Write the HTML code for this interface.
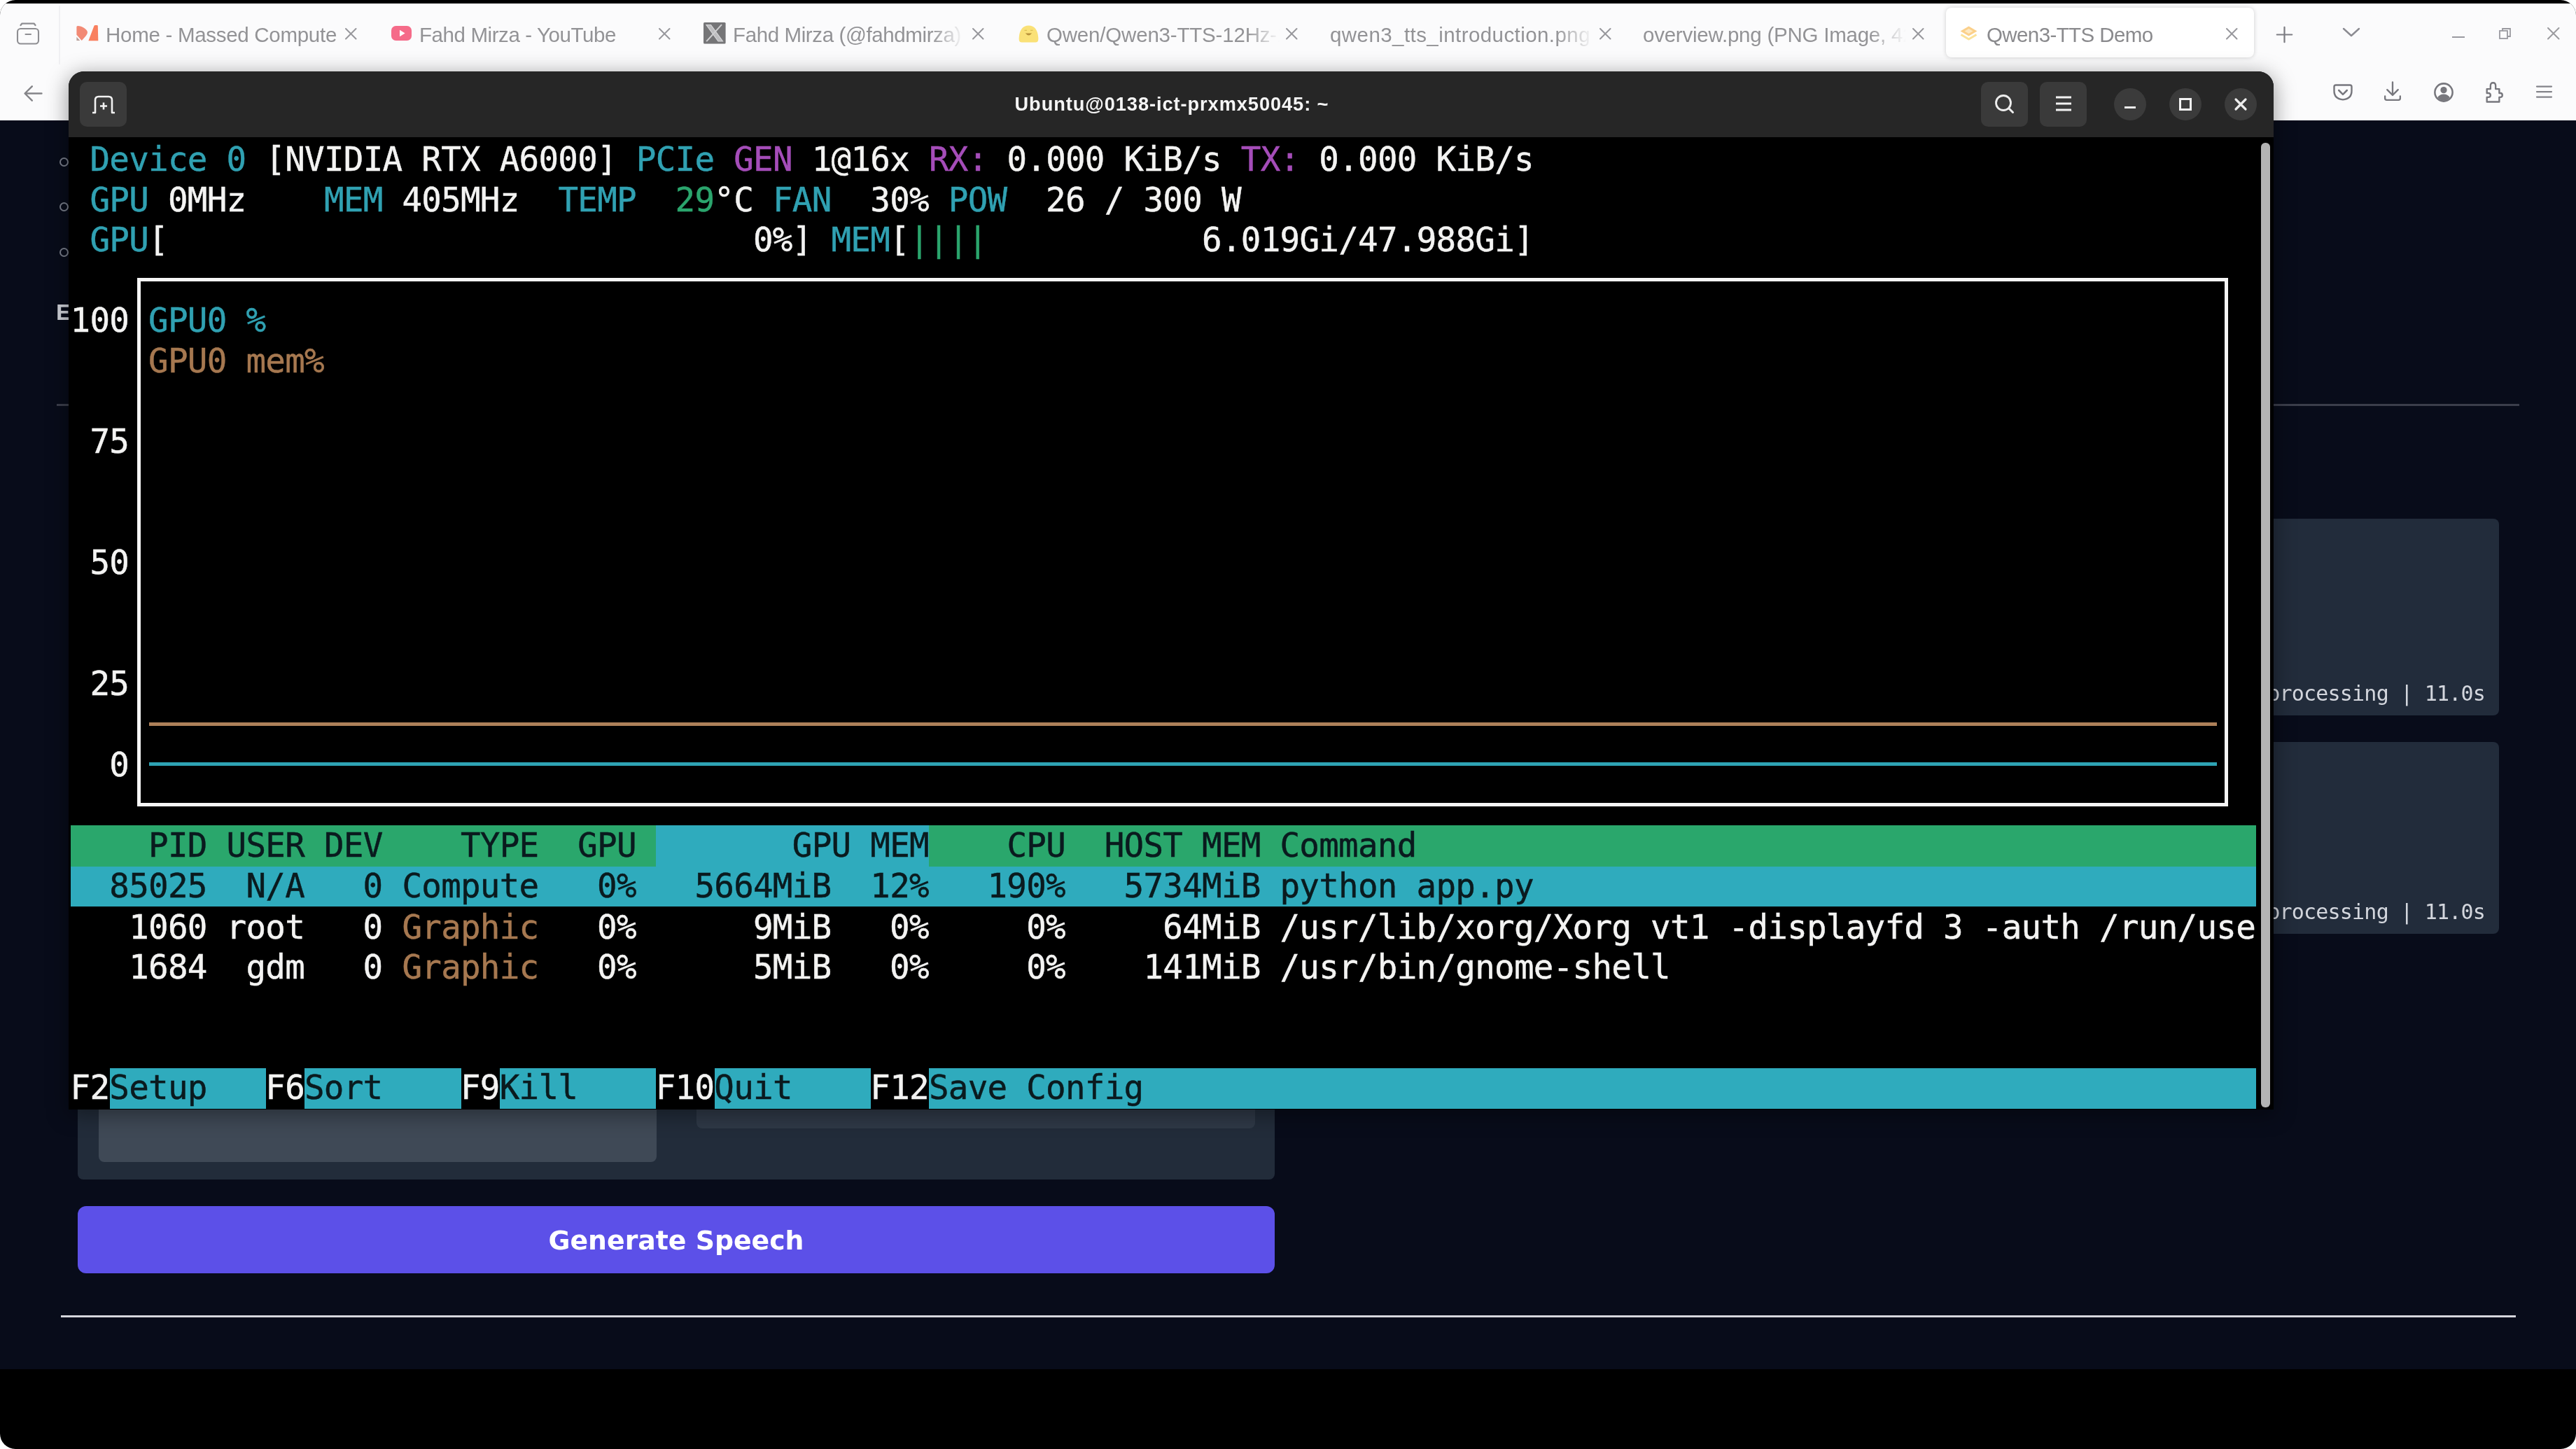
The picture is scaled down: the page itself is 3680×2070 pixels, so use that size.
<!DOCTYPE html>
<html lang="en">
<head>
<meta charset="utf-8">
<title>Qwen3-TTS Demo</title>
<style>
html,body{margin:0;padding:0;}
body{width:3680px;height:2070px;background:#fff;overflow:hidden;position:relative;font-family:"Liberation Sans",sans-serif;}
#frame{position:absolute;left:0;top:0;width:3680px;height:2070px;background:#000;border-radius:22px;overflow:hidden;will-change:transform;}
.abs{position:absolute;}
/* browser chrome */
#chrome{position:absolute;left:0;top:5px;width:3680px;height:168px;background:#fbfbfc;}
.tabtxt{position:absolute;top:22.5px;height:44px;line-height:44px;font-size:29.5px;color:#939396;white-space:nowrap;overflow:hidden;}
.tabx{position:absolute;width:18px;height:18px;}
/* page */
#page{position:absolute;left:0;top:172px;width:3680px;height:1784px;background:#080c1a;}
/* terminal */
#term{position:absolute;left:98px;top:102px;width:3150px;height:1483px;background:#000;border-radius:22px 22px 0 0;box-shadow:0 6px 30px 2px rgba(0,0,0,.38);}
#tbar{position:absolute;left:0;top:0;width:3150px;height:94px;background:#262626;border-radius:22px 22px 0 0;}
.t{position:absolute;white-space:pre;font-family:"DejaVu Sans Mono","Liberation Mono",monospace;font-size:47.5px;letter-spacing:-0.727px;line-height:57.68px;height:57.68px;-webkit-text-stroke:0.45px currentColor;}
.bg{position:absolute;}
.fade{-webkit-mask-image:linear-gradient(to right,#000 0,#000 86%,transparent 100%);mask-image:linear-gradient(to right,#000 0,#000 86%,transparent 100%);}
.mono{font-family:"DejaVu Sans Mono","Liberation Mono",monospace;font-size:30px;line-height:40px;letter-spacing:-0.8px;color:#d3d6dd;white-space:pre;}
</style>
</head>
<body>
<div id="frame">

<!-- ===== Browser chrome ===== -->
<div id="chrome">
<div class="abs" style="left:2780px;top:6px;width:440px;height:71px;background:#fff;border-radius:8px;box-shadow:0 0 6px rgba(0,0,0,.18);"></div>
<svg class="abs" style="left:20px;top:24px" width="40" height="38" viewBox="0 0 40 38"><g fill="none" stroke="#8e8e92" stroke-width="2.1" stroke-linecap="round" stroke-linejoin="round"><rect x="5" y="12" width="30" height="21.5" rx="4.5"/><path d="M9.5 7 L11.5 4.6 H28.5 L30.5 7" stroke-width="2.3"/><path d="M16.5 20h7.5"/></g></svg>
<div class="abs" style="left:83.5px;top:3px;width:2.5px;height:84px;background:#f0f0f3"></div>
<svg class="abs" style="left:108px;top:29px" width="34" height="26" viewBox="0 0 34 26"><path d="M1.4 4.5 Q1.4 3 3 3 C9 3 17 8 17 12.2 C17 15.5 12 20 8.8 24 L1.4 15.8 Z" fill="#f28a75"/><path d="M1.4 18.8 L6.3 24 L1.4 24 Z" fill="#b9a09a"/><path d="M26.3 3.2 Q26.8 2 28 2 H30.5 Q31.8 2 31.8 3.3 L32.3 24.2 H18.4 Z" fill="#f9805f"/></svg>
<div class="tabtxt" style="left:151px;width:336px;letter-spacing:-0.29px">Home - Massed Compute</div>
<svg class="abs" style="left:491.8px;top:33.8px" width="18.5" height="18.5" viewBox="-9.25 -9.25 18.5 18.5"><path d="M-7.25 -7.25L7.25 7.25M7.25 -7.25L-7.25 7.25" stroke="#97979c" stroke-width="2.0" fill="none" stroke-linecap="round"/></svg>
<svg class="abs" style="left:558.5px;top:32.3px" width="29" height="21" viewBox="0 0 29 21"><rect x="0" y="0" width="29" height="21" rx="6.5" fill="#f56b89"/><path d="M12 5.8 L19.6 10.5 L12 15.2 Z" fill="#fff"/></svg>
<div class="tabtxt" style="left:599px;width:300px;letter-spacing:-0.41px">Fahd Mirza - YouTube</div>
<svg class="abs" style="left:940.2px;top:34.2px" width="18.5" height="18.5" viewBox="-9.25 -9.25 18.5 18.5"><path d="M-7.25 -7.25L7.25 7.25M7.25 -7.25L-7.25 7.25" stroke="#97979c" stroke-width="2.0" fill="none" stroke-linecap="round"/></svg>
<svg class="abs" style="left:1005px;top:27.3px" width="32" height="31" viewBox="0 0 32 31"><rect width="31.6" height="30.6" rx="1.5" fill="#757577"/><path d="M4 3.5 L10.5 3.5 L27.5 27 L21 27 Z" fill="#bdbdbf" stroke="#d6d6d8" stroke-width="1.2"/><path d="M26 3.2 L4.2 27.2" stroke="#cfcfd1" stroke-width="2" fill="none"/></svg>
<div class="tabtxt fade" style="left:1047px;width:330px;letter-spacing:-0.39px">Fahd Mirza (@fahdmirza) on X</div>
<svg class="abs" style="left:1387.8px;top:34.2px" width="18.5" height="18.5" viewBox="-9.25 -9.25 18.5 18.5"><path d="M-7.25 -7.25L7.25 7.25M7.25 -7.25L-7.25 7.25" stroke="#97979c" stroke-width="2.0" fill="none" stroke-linecap="round"/></svg>
<svg class="abs" style="left:1455px;top:29.5px" width="29" height="27" viewBox="0 0 29 27"><path d="M4.5 25.5 C1 25.5 0.3 22.5 0.8 18 C1.5 8 6 1.5 14.5 1.5 C23 1.5 27.5 8 28.2 18 C28.7 22.5 28 25.5 24.5 25.5 Z" fill="#fae177"/><path d="M8.5 8.4h3.5M17 8.4h3.5" stroke="#dcbf55" stroke-width="1.4"/><path d="M9.8 12.6 Q14.5 18.4 19.2 12.6 Z" fill="#b8923a"/></svg>
<div class="tabtxt fade" style="left:1495px;width:333px;letter-spacing:-0.19px">Qwen/Qwen3-TTS-12Hz-1.7B</div>
<svg class="abs" style="left:1835.8px;top:34.2px" width="18.5" height="18.5" viewBox="-9.25 -9.25 18.5 18.5"><path d="M-7.25 -7.25L7.25 7.25M7.25 -7.25L-7.25 7.25" stroke="#97979c" stroke-width="2.0" fill="none" stroke-linecap="round"/></svg>
<div class="tabtxt fade" style="left:1900px;width:376px;letter-spacing:0.43px">qwen3_tts_introduction.png (PNG</div>
<svg class="abs" style="left:2283.8px;top:34.2px" width="18.5" height="18.5" viewBox="-9.25 -9.25 18.5 18.5"><path d="M-7.25 -7.25L7.25 7.25M7.25 -7.25L-7.25 7.25" stroke="#97979c" stroke-width="2.0" fill="none" stroke-linecap="round"/></svg>
<div class="tabtxt fade" style="left:2347px;width:376px;letter-spacing:-0.23px">overview.png (PNG Image, 4200</div>
<svg class="abs" style="left:2730.8px;top:34.2px" width="18.5" height="18.5" viewBox="-9.25 -9.25 18.5 18.5"><path d="M-7.25 -7.25L7.25 7.25M7.25 -7.25L-7.25 7.25" stroke="#97979c" stroke-width="2.0" fill="none" stroke-linecap="round"/></svg>
<svg class="abs" style="left:2799px;top:31px" width="27" height="24" viewBox="0 0 27 24"><path d="M13.5 1.5 L25.5 8.5 L13.5 15.5 L1.5 8.5 Z" fill="#fbd08a"/><path d="M13.5 5 L19.5 8.5 L13.5 12 L7.5 8.5 Z" fill="#fde9c4"/><path d="M2.5 13.5 L13.5 20 L24.5 13.5" stroke="#fbe29a" stroke-width="3" fill="none" stroke-linejoin="round"/></svg>
<div class="tabtxt" style="left:2838px;width:300px;color:#8a8a8d;letter-spacing:-0.6px">Qwen3-TTS Demo</div>
<svg class="abs" style="left:3178.8px;top:34.2px" width="18.5" height="18.5" viewBox="-9.25 -9.25 18.5 18.5"><path d="M-7.25 -7.25L7.25 7.25M7.25 -7.25L-7.25 7.25" stroke="#97979c" stroke-width="2.0" fill="none" stroke-linecap="round"/></svg>
<svg class="abs" style="left:3250.5px;top:32px" width="25" height="25" viewBox="0 0 28 28"><path d="M14 2V26M2 14H26" stroke="#7c7c82" stroke-width="2.5" stroke-linecap="round"/></svg>
<svg class="abs" style="left:3345px;top:33px" width="28" height="18" viewBox="0 0 28 18"><path d="M3 3L14 13L25 3" stroke="#8b8b91" stroke-width="2.4" fill="none" stroke-linecap="round" stroke-linejoin="round"/></svg>
<div class="abs" style="left:3503px;top:47px;width:18px;height:2px;background:#9a9aa0"></div>
<svg class="abs" style="left:3568px;top:33px" width="22" height="22" viewBox="0 0 22 22"><g fill="none" stroke="#9a9aa0" stroke-width="1.8"><rect x="3" y="6" width="11" height="11"/><path d="M7 6V3H18V14H14"/></g></svg>
<svg class="abs" style="left:3638.2px;top:33.2px" width="19.5" height="19.5" viewBox="-9.75 -9.75 19.5 19.5"><path d="M-7.75 -7.75L7.75 7.75M7.75 -7.75L-7.75 7.75" stroke="#9b9b9f" stroke-width="2.0" fill="none" stroke-linecap="round"/></svg>
<svg class="abs" style="left:32px;top:113.5px" width="31" height="29" viewBox="0 0 36 34"><path d="M32 17H5M16 5L4 17L16 29" stroke="#858589" stroke-width="2.9" fill="none" stroke-linecap="round" stroke-linejoin="round"/></svg>
<svg class="abs" style="left:3331.7px;top:111.5px" width="30" height="29" viewBox="0 0 36 34"><path d="M6 5H30Q33 5 33 8V15Q33 29 18 30Q3 29 3 15V8Q3 5 6 5Z" fill="none" stroke="#77777d" stroke-width="2.9"/><path d="M11 14L18 21L25 14" fill="none" stroke="#77777d" stroke-width="3" stroke-linecap="round" stroke-linejoin="round"/></svg>
<svg class="abs" style="left:3404.0px;top:109.5px" width="28" height="31" viewBox="0 0 36 40"><path d="M18 3V26M8 17L18 27L28 17" fill="none" stroke="#77777d" stroke-width="3" stroke-linecap="round" stroke-linejoin="round"/><path d="M4 29V33Q4 36 7 36H29Q32 36 32 33V29" fill="none" stroke="#77777d" stroke-width="3" stroke-linecap="round"/></svg>
<svg class="abs" style="left:3475.0px;top:110.5px" width="32" height="32" viewBox="0 0 38 38"><circle cx="19" cy="19" r="15" fill="none" stroke="#77777d" stroke-width="3"/><circle cx="19" cy="15" r="5.5" fill="#77777d"/><path d="M8.5 28Q12 22 19 22Q26 22 29.5 28Q25 33 19 33Q13 33 8.5 28Z" fill="#77777d"/></svg>
<svg class="abs" style="left:3549.0px;top:109.5px" width="28" height="33" viewBox="0 0 38 44"><path d="M6 16H13V10Q13 4 18 4Q23 4 23 10V16H30V24H32Q36 24 36 28Q36 32 32 32H30V41H6V32H9Q13 32 13 28Q13 24 9 24H6Z" transform="translate(-1,0)" fill="none" stroke="#77777d" stroke-width="3.2" stroke-linejoin="round"/></svg>
<svg class="abs" style="left:3620.5px;top:114.0px" width="27" height="24" viewBox="0 0 34 32"><path d="M3 6H31M3 16H31M3 26H31" stroke="#84848a" stroke-width="3" stroke-linecap="round"/></svg>
</div>

<!-- ===== Page ===== -->
<div id="page">
<div class="abs" style="left:85px;top:53px;width:9px;height:9px;border:2px solid #7a7f8c;border-radius:50%"></div>
<div class="abs" style="left:85px;top:117px;width:9px;height:9px;border:2px solid #7a7f8c;border-radius:50%"></div>
<div class="abs" style="left:85px;top:182px;width:9px;height:9px;border:2px solid #7a7f8c;border-radius:50%"></div>
<div class="abs" style="left:80px;top:256px;font:bold 34px/40px 'Liberation Mono',monospace;color:#cfd2d9">E</div>
<div class="abs" style="left:81px;top:405px;width:3518px;height:3px;background:#3b3e4b"></div>
<div class="abs" style="left:3200px;top:569px;width:370px;height:281px;background:#222c3b;border-radius:8px"></div>
<div class="abs" style="left:3200px;top:888px;width:370px;height:274px;background:#222c3b;border-radius:8px"></div>
<div class="abs mono" style="left:3100px;top:799px;width:450px;text-align:right">processing | 11.0s</div>
<div class="abs mono" style="left:3100px;top:1111px;width:450px;text-align:right">processing | 11.0s</div>
<div class="abs" style="left:111px;top:1228px;width:1710px;height:285px;background:#222c3a;border-radius:8px"></div>
<div class="abs" style="left:141px;top:1228px;width:797px;height:260px;background:#3f4956;border-radius:8px"></div>
<div class="abs" style="left:995px;top:1228px;width:798px;height:212px;background:#2f3947;border-radius:8px"></div>
<div class="abs" style="left:111px;top:1551px;width:1710px;height:96px;background:#5c50e8;border-radius:12px;color:#fff;font:bold 37.8px/98px 'DejaVu Sans',sans-serif;text-align:center">Generate Speech</div>
<div class="abs" style="left:87px;top:1707px;width:3507px;height:3px;background:#d5d6dc"></div>
</div>

<!-- ===== Terminal window ===== -->
<div id="term">
  <div id="tbar">
<div class="abs" style="left:16px;top:15px;width:67px;height:64px;background:#3a3a3a;border-radius:10px"></div>
<svg class="abs" style="left:32px;top:33px" width="36" height="30" viewBox="0 0 36 30"><path d="M2 26H6V8Q6 3 11 3H25Q30 3 30 8V26H34" fill="none" stroke="#f2f2f2" stroke-width="2.6" stroke-linejoin="round"/><path d="M18 11.5V21.5M13 16.5H23" stroke="#f2f2f2" stroke-width="2.6"/></svg>
<div class="abs" style="left:0;top:27px;width:3152px;text-align:center;font:bold 27.2px/40px 'Liberation Sans',sans-serif;color:#f5f5f5;letter-spacing:0.94px">Ubuntu@0138-ict-prxmx50045: ~</div>
<div class="abs" style="left:2732px;top:15px;width:67px;height:64px;background:#3a3a3a;border-radius:10px"></div>
<svg class="abs" style="left:2748px;top:28.5px" width="36" height="36" viewBox="0 0 36 36"><circle cx="16" cy="16" r="10.5" fill="none" stroke="#ededed" stroke-width="2.8"/><path d="M24 24L29.5 29.5" stroke="#ededed" stroke-width="3" stroke-linecap="round"/></svg>
<div class="abs" style="left:2816px;top:15px;width:67px;height:64px;background:#3a3a3a;border-radius:10px"></div>
<svg class="abs" style="left:2836px;top:32px" width="28" height="28" viewBox="0 0 28 28"><path d="M3 5H25M3 14H25M3 23H25" stroke="#f2f2f2" stroke-width="3"/></svg>
<div class="abs" style="left:2922px;top:24px;width:46px;height:46px;border-radius:50%;background:#3b3b3b"></div>
<div class="abs" style="left:3001px;top:24px;width:46px;height:46px;border-radius:50%;background:#3b3b3b"></div>
<div class="abs" style="left:3080px;top:24px;width:46px;height:46px;border-radius:50%;background:#3b3b3b"></div>
<div class="abs" style="left:2937px;top:50px;width:16px;height:3px;background:#ededed"></div>
<div class="abs" style="left:3015px;top:38px;width:12px;height:12px;border:3px solid #f2f2f2"></div>
<svg class="abs" style="left:3092px;top:36px" width="22" height="22" viewBox="0 0 22 22"><path d="M4 4L18 18M18 4L4 18" stroke="#ededed" stroke-width="3.2" stroke-linecap="round"/></svg>
  </div>
</div>
<div id="termtext">
<div class="bg" style="left:101.0px;top:1178.8px;width:836.5px;height:59.3px;background:#2aa76c"></div>
<div class="bg" style="left:937.1px;top:1178.8px;width:390.6px;height:59.3px;background:#2fabbd"></div>
<div class="bg" style="left:1327.3px;top:1178.8px;width:1895.6px;height:59.3px;background:#2aa76c"></div>
<div class="bg" style="left:101.0px;top:1238.1px;width:3121.8px;height:57.4px;background:#2fabbd"></div>
<div class="bg" style="left:156.7px;top:1525.7px;width:223.4px;height:58.8px;background:#2fabbd"></div>
<div class="bg" style="left:435.4px;top:1525.7px;width:223.4px;height:58.8px;background:#2fabbd"></div>
<div class="bg" style="left:714.1px;top:1525.7px;width:223.4px;height:58.8px;background:#2fabbd"></div>
<div class="bg" style="left:1020.7px;top:1525.7px;width:223.4px;height:58.8px;background:#2fabbd"></div>
<div class="bg" style="left:1327.3px;top:1525.7px;width:1895.6px;height:58.8px;background:#2fabbd"></div>
<div class="t" style="left:128.5px;top:198.6px;color:#30a1b2">Device 0</div>
<div class="t" style="left:379.3px;top:198.6px;color:#f3f3f2">[NVIDIA RTX A6000]</div>
<div class="t" style="left:908.8px;top:198.6px;color:#30a1b2">PCIe</div>
<div class="t" style="left:1048.2px;top:198.6px;color:#a54db9">GEN</div>
<div class="t" style="left:1159.7px;top:198.6px;color:#f3f3f2">1@16x</div>
<div class="t" style="left:1326.9px;top:198.6px;color:#a54db9">RX:</div>
<div class="t" style="left:1438.4px;top:198.6px;color:#f3f3f2">0.000 KiB/s</div>
<div class="t" style="left:1772.8px;top:198.6px;color:#a54db9">TX:</div>
<div class="t" style="left:1884.3px;top:198.6px;color:#f3f3f2">0.000 KiB/s</div>
<div class="t" style="left:128.5px;top:256.7px;color:#30a1b2">GPU</div>
<div class="t" style="left:239.9px;top:256.7px;color:#f3f3f2">0MHz</div>
<div class="t" style="left:462.9px;top:256.7px;color:#30a1b2">MEM</div>
<div class="t" style="left:574.4px;top:256.7px;color:#f3f3f2">405MHz</div>
<div class="t" style="left:797.4px;top:256.7px;color:#30a1b2">TEMP</div>
<div class="t" style="left:964.6px;top:256.7px;color:#2ba56d">29</div>
<div class="t" style="left:1020.3px;top:256.7px;color:#f3f3f2">°C</div>
<div class="t" style="left:1103.9px;top:256.7px;color:#30a1b2">FAN</div>
<div class="t" style="left:1243.3px;top:256.7px;color:#f3f3f2">30%</div>
<div class="t" style="left:1354.8px;top:256.7px;color:#30a1b2">POW</div>
<div class="t" style="left:1494.1px;top:256.7px;color:#f3f3f2">26 / 300 W</div>
<div class="t" style="left:128.5px;top:314.0px;color:#30a1b2">GPU</div>
<div class="t" style="left:212.1px;top:314.0px;color:#f3f3f2">[</div>
<div class="t" style="left:1076.0px;top:314.0px;color:#f3f3f2">0%]</div>
<div class="t" style="left:1187.5px;top:314.0px;color:#30a1b2">MEM</div>
<div class="t" style="left:1271.1px;top:314.0px;color:#f3f3f2">[</div>
<div class="t" style="left:1299.0px;top:314.0px;color:#2ba56d">||||</div>
<div class="t" style="left:1717.1px;top:314.0px;color:#f3f3f2">6.019Gi/47.988Gi]</div>
<div class="t" style="left:100.6px;top:429.3px;color:#f3f3f2">100</div>
<div class="t" style="left:212.1px;top:429.3px;color:#30a1b2">GPU0 %</div>
<div class="t" style="left:212.1px;top:487.0px;color:#a67850">GPU0 mem%</div>
<div class="t" style="left:128.5px;top:602.4px;color:#f3f3f2">75</div>
<div class="t" style="left:128.5px;top:775.4px;color:#f3f3f2">50</div>
<div class="t" style="left:128.5px;top:948.4px;color:#f3f3f2">25</div>
<div class="t" style="left:156.3px;top:1063.8px;color:#f3f3f2">0</div>
<div class="t" style="left:212.1px;top:1179.2px;color:#0a1a1e">PID</div>
<div class="t" style="left:323.6px;top:1179.2px;color:#0a1a1e">USER</div>
<div class="t" style="left:462.9px;top:1179.2px;color:#0a1a1e">DEV</div>
<div class="t" style="left:658.0px;top:1179.2px;color:#0a1a1e">TYPE</div>
<div class="t" style="left:825.2px;top:1179.2px;color:#0a1a1e">GPU</div>
<div class="t" style="left:1131.8px;top:1179.2px;color:#0a1a1e">GPU MEM</div>
<div class="t" style="left:1438.4px;top:1179.2px;color:#0a1a1e">CPU</div>
<div class="t" style="left:1577.7px;top:1179.2px;color:#0a1a1e">HOST MEM</div>
<div class="t" style="left:1828.5px;top:1179.2px;color:#0a1a1e">Command</div>
<div class="t" style="left:156.3px;top:1236.8px;color:#0a1a1e">85025</div>
<div class="t" style="left:351.4px;top:1236.8px;color:#0a1a1e">N/A</div>
<div class="t" style="left:518.6px;top:1236.8px;color:#0a1a1e">0</div>
<div class="t" style="left:574.4px;top:1236.8px;color:#0a1a1e">Compute</div>
<div class="t" style="left:853.1px;top:1236.8px;color:#0a1a1e">0%</div>
<div class="t" style="left:992.4px;top:1236.8px;color:#0a1a1e">5664MiB</div>
<div class="t" style="left:1243.3px;top:1236.8px;color:#0a1a1e">12%</div>
<div class="t" style="left:1410.5px;top:1236.8px;color:#0a1a1e">190%</div>
<div class="t" style="left:1605.6px;top:1236.8px;color:#0a1a1e">5734MiB</div>
<div class="t" style="left:1828.5px;top:1236.8px;color:#0a1a1e">python app.py</div>
<div class="t" style="left:184.2px;top:1295.7px;color:#f3f3f2">1060</div>
<div class="t" style="left:323.6px;top:1295.7px;color:#f3f3f2">root</div>
<div class="t" style="left:518.6px;top:1295.7px;color:#f3f3f2">0</div>
<div class="t" style="left:574.4px;top:1295.7px;color:#a67850">Graphic</div>
<div class="t" style="left:853.1px;top:1295.7px;color:#f3f3f2">0%</div>
<div class="t" style="left:1076.0px;top:1295.7px;color:#f3f3f2">9MiB</div>
<div class="t" style="left:1271.1px;top:1295.7px;color:#f3f3f2">0%</div>
<div class="t" style="left:1466.2px;top:1295.7px;color:#f3f3f2">0%</div>
<div class="t" style="left:1661.3px;top:1295.7px;color:#f3f3f2">64MiB</div>
<div class="t" style="left:1828.5px;top:1295.7px;color:#f3f3f2">/usr/lib/xorg/Xorg vt1 -displayfd 3 -auth /run/use</div>
<div class="t" style="left:184.2px;top:1353.2px;color:#f3f3f2">1684</div>
<div class="t" style="left:351.4px;top:1353.2px;color:#f3f3f2">gdm</div>
<div class="t" style="left:518.6px;top:1353.2px;color:#f3f3f2">0</div>
<div class="t" style="left:574.4px;top:1353.2px;color:#a67850">Graphic</div>
<div class="t" style="left:853.1px;top:1353.2px;color:#f3f3f2">0%</div>
<div class="t" style="left:1076.0px;top:1353.2px;color:#f3f3f2">5MiB</div>
<div class="t" style="left:1271.1px;top:1353.2px;color:#f3f3f2">0%</div>
<div class="t" style="left:1466.2px;top:1353.2px;color:#f3f3f2">0%</div>
<div class="t" style="left:1633.5px;top:1353.2px;color:#f3f3f2">141MiB</div>
<div class="t" style="left:1828.5px;top:1353.2px;color:#f3f3f2">/usr/bin/gnome-shell</div>
<div class="t" style="left:100.6px;top:1525.2px;color:#f3f3f2">F2</div>
<div class="t" style="left:156.3px;top:1525.2px;color:#0a1a1e">Setup</div>
<div class="t" style="left:379.3px;top:1525.2px;color:#f3f3f2">F6</div>
<div class="t" style="left:435.0px;top:1525.2px;color:#0a1a1e">Sort</div>
<div class="t" style="left:658.0px;top:1525.2px;color:#f3f3f2">F9</div>
<div class="t" style="left:713.7px;top:1525.2px;color:#0a1a1e">Kill</div>
<div class="t" style="left:936.7px;top:1525.2px;color:#f3f3f2">F10</div>
<div class="t" style="left:1020.3px;top:1525.2px;color:#0a1a1e">Quit</div>
<div class="t" style="left:1243.3px;top:1525.2px;color:#f3f3f2">F12</div>
<div class="t" style="left:1326.9px;top:1525.2px;color:#0a1a1e">Save Config</div>
<div class="abs" style="left:196.1px;top:397.3px;width:2987.3px;height:754.8px;border:5.2px solid #f6f6f6;box-sizing:border-box"></div>
<div class="abs" style="left:212.5px;top:1032.0px;width:2954.3px;height:4.8px;background:#ad8059"></div>
<div class="abs" style="left:212.5px;top:1089.4px;width:2954.3px;height:4.8px;background:#2ea3b4"></div>
<div class="abs" style="left:3230px;top:204px;width:13px;height:1378px;background:#b3b3b3;border-radius:6px"></div>
</div>

</div>
</body>
</html>
